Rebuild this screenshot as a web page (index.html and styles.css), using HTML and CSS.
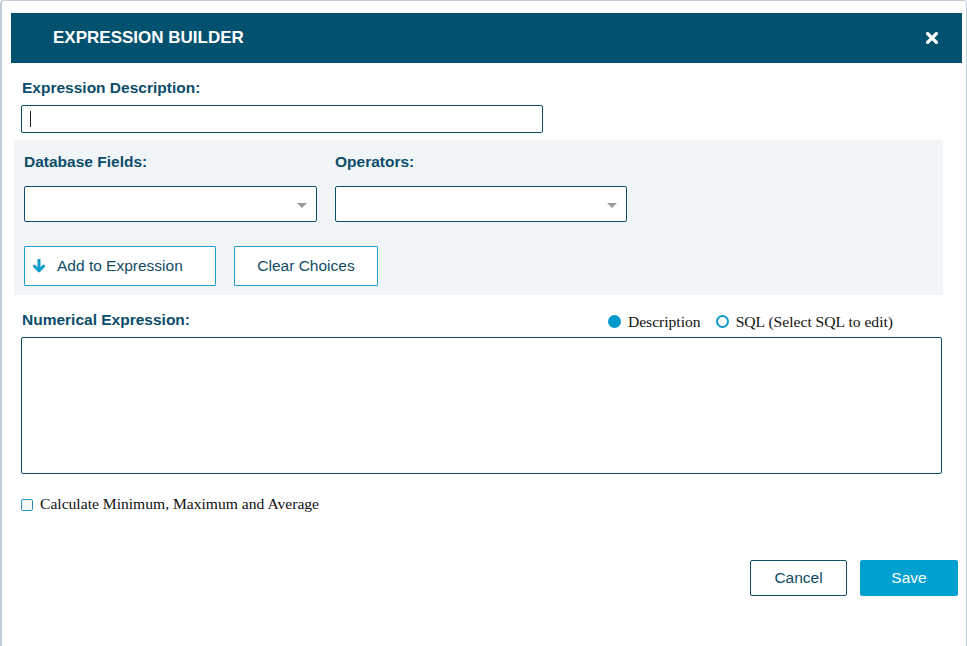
FILE: index.html
```html
<!DOCTYPE html>
<html>
<head>
<meta charset="utf-8">
<title>Expression Builder</title>
<link rel="stylesheet" href="styles.css">
</head>
<body>
<div class="dialog">
  <header class="hdr">
    <h1 class="hdr-title">EXPRESSION BUILDER</h1>
    <span class="hdr-close" aria-label="Close">
      <svg width="12" height="12" viewBox="0 0 12 12"><path d="M1.6 1.6 L10.4 10.4 M10.4 1.6 L1.6 10.4" stroke="#fff" stroke-width="3.4" stroke-linecap="round"/></svg>
    </span>
  </header>
  <div class="body">
    <div class="lbl lbl-desc">Expression Description:</div>
    <div class="input"><span class="text-caret"></span></div>

    <section class="panel">
      <div class="fields">
        <div class="field">
          <div class="lbl">Database Fields:</div>
          <div class="select"><span class="sel-arrow"></span></div>
        </div>
        <div class="field">
          <div class="lbl">Operators:</div>
          <div class="select"><span class="sel-arrow"></span></div>
        </div>
      </div>
      <div class="actions">
        <button class="btn btn-add">
          <svg class="ico-down" width="12" height="14" viewBox="0 0 12 14"><path d="M6 1 V11.5" stroke="#0a9bcd" stroke-width="3" stroke-linecap="round"/><path d="M1.5 7.2 L6 11.8 L10.5 7.2" stroke="#0a9bcd" stroke-width="3" fill="none" stroke-linecap="round" stroke-linejoin="round"/></svg>
          <span>Add to Expression</span>
        </button>
        <button class="btn btn-clear">Clear Choices</button>
      </div>
    </section>

    <div class="expr-head">
      <div class="lbl">Numerical Expression:</div>
      <div class="radios">
        <span class="radio radio-on"></span><span class="radio-text">Description</span>
        <span class="radio radio-off"></span><span class="radio-text">SQL (Select SQL to edit)</span>
      </div>
    </div>
    <div class="textarea"></div>

    <div class="check-row">
      <span class="checkbox"></span>
      <span class="check-text">Calculate Minimum, Maximum and Average</span>
    </div>

    <div class="footer">
      <button class="fbtn fbtn-cancel">Cancel</button>
      <button class="fbtn fbtn-save">Save</button>
    </div>
  </div>
</div>
</body>
</html>
```
FILE: styles.css
```css
* { box-sizing: border-box; }
html, body { margin: 0; padding: 0; background: #fff; }
body { font-family: "Liberation Sans", Arial, sans-serif; }

.dialog {
  width: 967px;
  height: 646px;
  border: 1px solid #c3cdd7;
  border-left-width: 2px;
  border-bottom: 0;
  border-radius: 4px 4px 0 0;
  background: #fff;
  overflow: hidden;
}

.hdr {
  margin: 12px 4px 0 9px;
  height: 50px;
  background: #02526f;
  display: flex;
  align-items: center;
  justify-content: space-between;
  padding: 0 24px 0 42px;
}
.hdr-title {
  margin: 0;
  color: #fff;
  font-size: 17px;
  font-weight: bold;
  line-height: 20px;
}
.hdr-close { display: flex; width: 12px; height: 12px; margin-top: -1px; }

.body { padding: 0 8px 0 19px; }

.lbl {
  color: #0a4d6a;
  font-size: 15.5px;
  font-weight: bold;
  line-height: 18px;
}
.lbl-desc { margin-top: 16px; padding-left: 1px; }

.input {
  margin-top: 8px;
  width: 522px;
  height: 28px;
  border: 1px solid #0d4e68;
  border-radius: 2px;
  display: flex;
  align-items: center;
  padding-left: 8px;
}
.text-caret { width: 1px; height: 16px; background: #222; }

.panel {
  margin: 7px 15px 0 -7px;
  background: #f2f5f8;
  padding: 13px 10px 9px 10px;
}
.fields { display: flex; gap: 18px; }
.select {
  margin-top: 15px;
  width: 293px;
  height: 36px;
  background: #fff;
  border: 1px solid #0d4e68;
  border-radius: 2px;
  display: flex;
  align-items: center;
  justify-content: flex-end;
  padding-right: 9px;
}
.field + .field .select { width: 292px; }
.sel-arrow {
  width: 0; height: 0;
  border-left: 5px solid transparent;
  border-right: 5px solid transparent;
  border-top: 5px solid #9a9a9a;
  margin-top: 2px;
}

.actions { display: flex; gap: 18px; margin-top: 24px; }
.btn {
  height: 40px;
  background: #fff;
  border: 1px solid #1f9ccd;
  border-radius: 1px;
  font-family: "Liberation Sans", Arial, sans-serif;
  font-size: 15.5px;
  color: #0e4c66;
  display: flex;
  align-items: center;
  padding: 0;
  margin: 0;
}
.btn-add { width: 192px; padding-left: 8px; gap: 12px; }
.btn-clear { width: 144px; justify-content: center; }

.expr-head {
  margin-top: 16px;
  height: 26px;
  display: flex;
  justify-content: space-between;
  align-items: flex-start;
  margin-right: 65px;
  padding-left: 1px;
}
.radios {
  margin-top: 2px;
  display: flex;
  align-items: center;
  font-family: "Liberation Serif", "Times New Roman", serif;
  font-size: 15.6px;
  line-height: 18px;
  color: #111;
}
.radio {
  width: 13px;
  height: 13px;
  border-radius: 50%;
  margin-right: 7px;
  margin-top: -2px;
}
.radio-on { background: #0099cc; }
.radio-off { border: 2px solid #0a9ad0; margin-left: 15px; }

.textarea {
  width: 921px;
  height: 137px;
  border: 1px solid #0d4e68;
  border-radius: 2px;
}

.check-row {
  margin-top: 21px;
  display: flex;
  align-items: center;
  height: 18px;
  font-family: "Liberation Serif", "Times New Roman", serif;
  font-size: 15.6px;
  color: #111;
}
.checkbox {
  width: 12px;
  height: 12px;
  border: 1.5px solid #2b8fbd;
  border-radius: 2px;
  background: #f7fbfd;
  margin-right: 7px;
  margin-top: 2px;
}

.footer {
  margin-top: 47px;
  display: flex;
  justify-content: flex-end;
  gap: 13px;
}
.fbtn {
  height: 36px;
  font-family: "Liberation Sans", Arial, sans-serif;
  font-size: 15.5px;
  border-radius: 2px;
  padding: 0;
  margin: 0;
}
.fbtn-cancel { width: 97px; background: #fff; border: 1px solid #0d4e68; color: #0e4c66; }
.fbtn-save { width: 98px; background: #00a0d1; border: 1px solid #00a0d1; color: #fff; }
```
